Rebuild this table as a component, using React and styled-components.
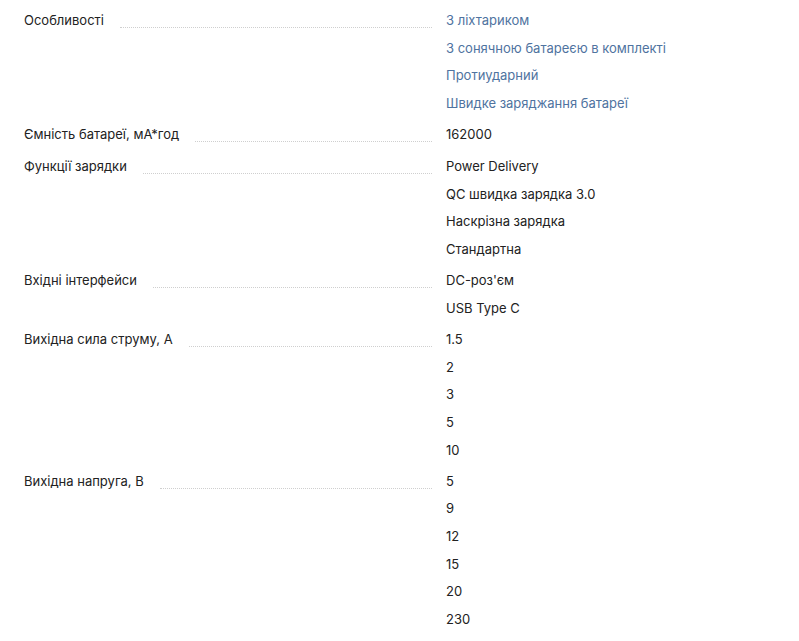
import React from "react";
import styled, { createGlobalStyle } from "styled-components";

const Global = createGlobalStyle`
  html, body { margin: 0; padding: 0; background: #fff; }
  body { font-family: Inter, "Noto Sans", "Liberation Sans", sans-serif; }
`;

const Table = styled.div`
  padding: 7px 0 0 24px;
  width: 775px;
  box-sizing: border-box;
`;

const Row = styled.div`
  display: grid;
  grid-template-columns: 408px 1fr;
  column-gap: 14px;
  margin-bottom: 3.8px;
`;

const LabelCell = styled.div`
  display: flex;
  align-items: flex-start;
  height: 28px;
`;

const Label = styled.span`
  font-size: 13px;
  line-height: 27.6px;
  color: #222;
  white-space: nowrap;
  padding-right: 16px;
`;

const Leader = styled.span`
  flex: 1;
  margin-top: 20px;
  border-bottom: 1px dotted #cfcfcf;
`;

const Values = styled.div`
  display: flex;
  flex-direction: column;
`;

const Value = styled.span`
  font-size: 13px;
  line-height: 27.6px;
  color: ${(p) => (p.$link ? "#4f73a0" : "#222")};
  white-space: nowrap;
`;

const rows = [
  { label: "Особливості", link: true, values: ["З ліхтариком", "З сонячною батареєю в комплекті", "Протиударний", "Швидке заряджання батареї"] },
  { label: "Ємність батареї, мА*год", values: ["162000"] },
  { label: "Функції зарядки", values: ["Power Delivery", "QC швидка зарядка 3.0", "Наскрізна зарядка", "Стандартна"] },
  { label: "Вхідні інтерфейси", values: ["DC-роз'єм", "USB Type C"] },
  { label: "Вихідна сила струму, А", values: ["1.5", "2", "3", "5", "10"] },
  { label: "Вихідна напруга, В", values: ["5", "9", "12", "15", "20", "230"] },
];

export default function App() {
  return (
    <>
      <Global />
      <Table>
        {rows.map((r) => (
          <Row key={r.label}>
            <LabelCell>
              <Label>{r.label}</Label>
              <Leader />
            </LabelCell>
            <Values>
              {r.values.map((v) => (
                <Value key={v} $link={r.link}>{v}</Value>
              ))}
            </Values>
          </Row>
        ))}
      </Table>
    </>
  );
}
